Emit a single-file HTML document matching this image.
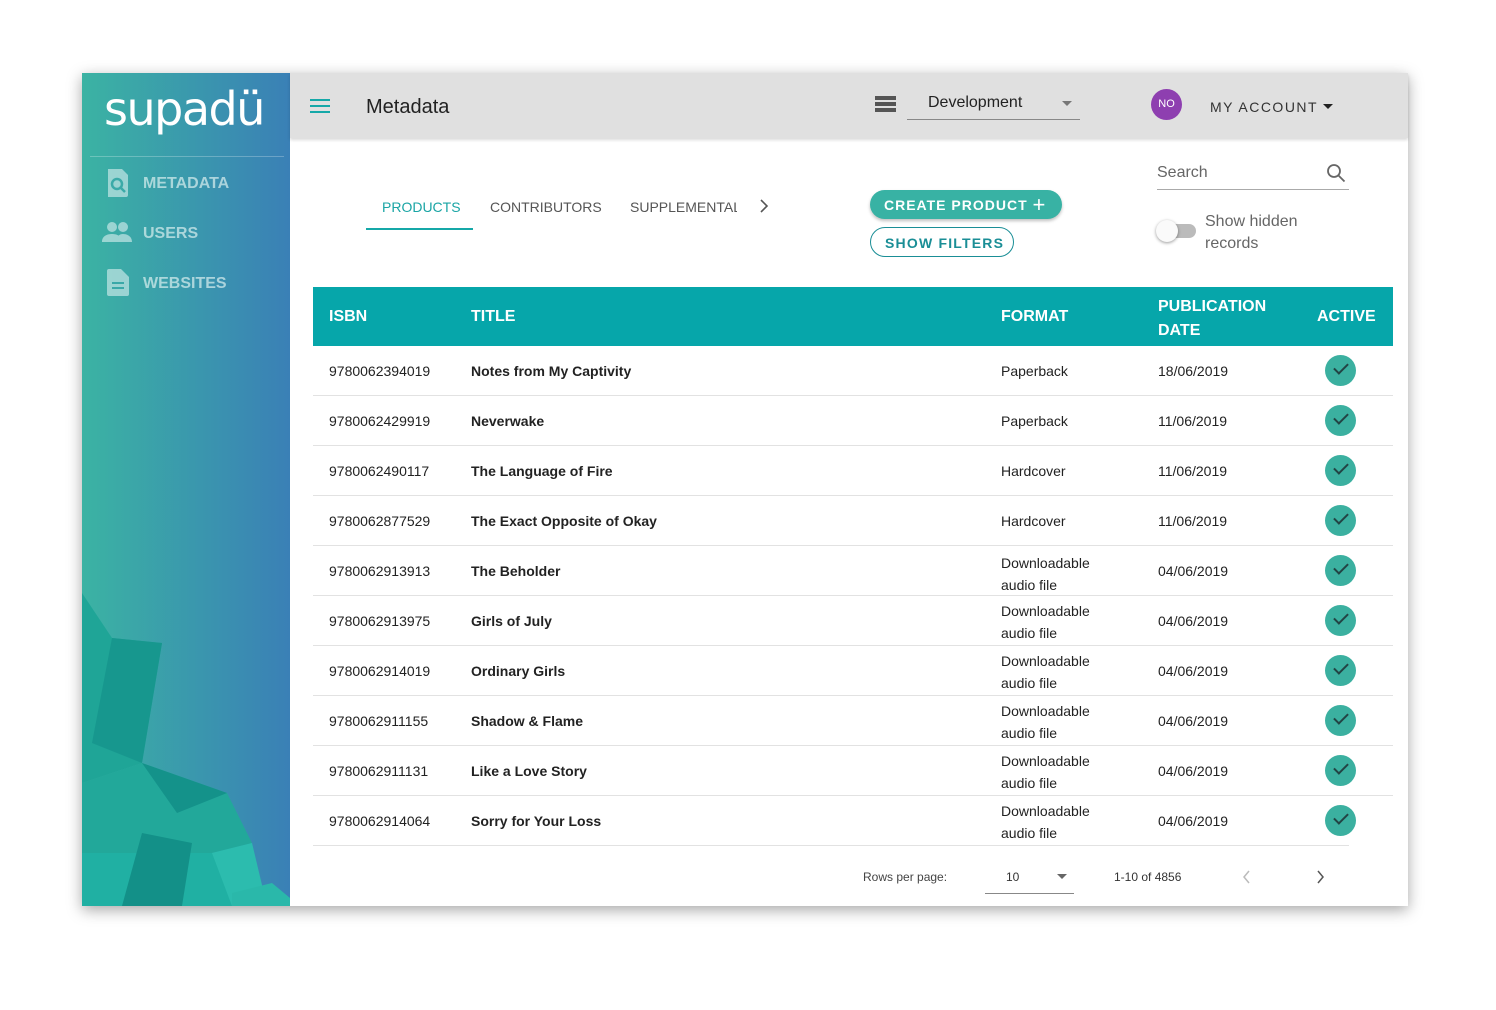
<!DOCTYPE html>
<html><head><meta charset="utf-8"><style>
*{margin:0;padding:0;box-sizing:border-box}
body{width:1496px;height:1010px;background:#fff;font-family:"Liberation Sans",sans-serif;position:relative;overflow:hidden}
.win{position:absolute;left:82px;top:73px;width:1326px;height:833px;background:#fff;box-shadow:0 4px 14px rgba(0,0,0,.35)}
.side{position:absolute;left:0;top:0;width:208px;height:833px;background:linear-gradient(90deg,#3bb3a3,#3a80b6);overflow:hidden}
.logo{position:absolute;left:22px;top:9px;color:#fff;font-size:46px;font-family:"DejaVu Sans","Liberation Sans",sans-serif;letter-spacing:-1.5px;font-weight:500}
.sep{position:absolute;left:8px;top:83px;width:194px;height:1px;background:rgba(255,255,255,.25)}
.nav{position:absolute;left:61px;color:rgba(220,240,240,.7);font-weight:bold;font-size:16px}
.top{position:absolute;left:208px;top:0;width:1118px;height:65px;background:#e0e0e0;box-shadow:0 2px 3px rgba(0,0,0,.15)}
.a{position:absolute;white-space:nowrap}
.th{position:absolute;left:231px;top:214px;width:1080px;height:59px;background:#06a6aa;color:#fff;font-weight:bold;font-size:16px}
.row{position:absolute;left:231px;width:1080px;height:50px;border-bottom:1px solid #e2e2e2;font-size:14px;color:#222}
.row span{position:absolute}
.chk{position:absolute;left:1012px;top:9px;width:31px;height:31px;border-radius:50%;background:#3bb0a0}
.chk::after{content:"";position:absolute;left:9px;top:8px;width:12px;height:6px;border-left:2px solid #244;border-bottom:2px solid #244;transform:rotate(-45deg)}
</style></head><body>
<div class="win">
<div class="side">
<div class="logo">supadü</div>
<div class="sep"></div>
<svg class="a" style="left:24px;top:96px" width="24" height="28" viewBox="0 0 24 28"><path d="M2 0h14l6 6v20a2 2 0 0 1-2 2H2z" fill="rgba(220,240,240,.6)"/><circle cx="11" cy="15" r="5" fill="none" stroke="#3baaa8" stroke-width="2.5"/><path d="M14 18l5 5" stroke="#3baaa8" stroke-width="2.5"/></svg>
<div class="nav" style="top:102px">METADATA</div>
<svg class="a" style="left:20px;top:148px" width="30" height="22" viewBox="0 0 30 22"><circle cx="10" cy="6" r="5" fill="rgba(220,240,240,.6)"/><circle cx="21" cy="6" r="5" fill="rgba(220,240,240,.6)"/><path d="M0 21c0-6 5-8 10-8s10 2 10 8zM14 21c0-5 3-8 7-8s9 2 9 8z" fill="rgba(220,240,240,.6)"/></svg>
<div class="nav" style="top:152px">USERS</div>
<svg class="a" style="left:25px;top:196px" width="22" height="27" viewBox="0 0 22 27"><path d="M2 0h12l8 8v17a2 2 0 0 1-2 2H2a2 2 0 0 1-2-2V2a2 2 0 0 1 2-2z" fill="rgba(220,240,240,.6)"/><path d="M5 14h12M5 19h12" stroke="#3aa8a8" stroke-width="2"/></svg>
<div class="nav" style="top:202px">WEBSITES</div>
<svg class="a" style="left:0;top:520px" width="208" height="313" viewBox="0 0 208 313">
<polygon points="0,0 30,45 80,50 60,170 0,190" fill="#1fa597"/>
<polygon points="30,45 80,50 60,170 10,150" fill="#17978e"/>
<polygon points="0,190 60,170 145,200 170,250 130,260 0,260" fill="#22a89a"/>
<polygon points="60,170 145,200 95,220" fill="#14928a"/>
<polygon points="0,260 130,260 170,250 150,313 0,313" fill="#20b0a3"/>
<polygon points="60,240 110,250 100,313 40,313" fill="#139088"/>
<polygon points="130,260 170,250 185,313 150,313" fill="#2cbcae"/>
<polygon points="150,300 190,290 208,305 208,313 150,313" fill="#2ab8aa"/>
</svg>
</div>
<div class="top">
<svg class="a" style="left:20px;top:26px" width="20" height="14"><path d="M0 1h20M0 7h20M0 13h20" stroke="#15a8a8" stroke-width="2"/></svg>
<div class="a" style="left:76px;top:23px;font-size:20px;color:#222">Metadata</div>
<svg class="a" style="left:585px;top:23px" width="21" height="16"><rect y="0" width="21" height="4" fill="#555"/><rect y="6" width="21" height="4" fill="#555"/><rect y="12" width="21" height="4" fill="#555"/></svg>
<div class="a" style="left:638px;top:21px;font-size:16px;color:#222">Development</div>
<div class="a" style="left:772px;top:28px;border:5px solid transparent;border-top-color:#777"></div>
<div class="a" style="left:617px;top:46px;width:173px;height:1px;background:#888"></div>
<div class="a" style="left:861px;top:16px;width:31px;height:31px;border-radius:50%;background:#8e3fb0;color:#fff;font-size:11px;text-align:center;line-height:31px">NO</div>
<div class="a" style="left:920px;top:26px;font-size:14px;letter-spacing:1.5px;color:#333">MY ACCOUNT</div>
<div class="a" style="left:1033px;top:31px;border:5px solid transparent;border-top-color:#222"></div>
</div>
<div class="a" style="left:300px;top:126px;font-size:14px;color:#1aa5a5">PRODUCTS</div>
<div class="a" style="left:284px;top:155px;width:107px;height:2px;background:#15a8a8"></div>
<div class="a" style="left:408px;top:126px;font-size:14px;color:#555">CONTRIBUTORS</div>
<div class="a" style="left:548px;top:126px;font-size:14px;color:#555;width:107px;overflow:hidden">SUPPLEMENTAL</div>
<svg class="a" style="left:677px;top:126px" width="10" height="14"><path d="M2 1l6 6-6 6" stroke="#555" stroke-width="1.6" fill="none"/></svg>
<div class="a" style="left:788px;top:117px;width:192px;height:29px;border-radius:15px;background:#38b2a4;color:#fff;font-weight:bold;font-size:14px;letter-spacing:1px;padding:7px 0 0 14px;box-shadow:0 2px 3px rgba(0,0,0,.25)">CREATE PRODUCT <span style="font-size:22px;position:relative;top:2px;font-weight:normal;line-height:0">+</span></div>
<div class="a" style="left:788px;top:154px;width:144px;height:30px;border-radius:15px;border:1px solid #1a8e96;color:#1a8e96;font-weight:bold;font-size:14px;letter-spacing:1.2px;padding:7px 0 0 14px">SHOW FILTERS</div>
<div class="a" style="left:1075px;top:91px;font-size:16px;color:#666">Search</div>
<svg class="a" style="left:1244px;top:90px" width="20" height="20"><circle cx="8" cy="8" r="6" fill="none" stroke="#666" stroke-width="1.8"/><path d="M12.5 12.5l6 6" stroke="#666" stroke-width="1.8"/></svg>
<div class="a" style="left:1075px;top:116px;width:192px;height:1px;background:#aaa"></div>
<div class="a" style="left:1078px;top:151px;width:36px;height:14px;border-radius:7px;background:#bbb"></div>
<div class="a" style="left:1074px;top:147px;width:22px;height:22px;border-radius:50%;background:#fafafa;box-shadow:0 1px 3px rgba(0,0,0,.4)"></div>
<div class="a" style="left:1123px;top:138px;font-size:16px;color:#666;line-height:22px">Show hidden<br>records</div>
<div class="th">
<span class="a" style="left:16px;top:21px">ISBN</span>
<span class="a" style="left:158px;top:21px">TITLE</span>
<span class="a" style="left:688px;top:21px">FORMAT</span>
<span class="a" style="left:845px;top:8px;line-height:24px">PUBLICATION<br>DATE</span>
<span class="a" style="left:1004px;top:21px">ACTIVE</span>
</div>
<div class="row" style="top:273px"><span style="left:16px;top:17px">9780062394019</span><span style="left:158px;top:17px;font-weight:bold">Notes from My Captivity</span><span style="left:688px;top:17px">Paperback</span><span style="left:845px;top:17px">18/06/2019</span><div class="chk"></div></div>
<div class="row" style="top:323px"><span style="left:16px;top:17px">9780062429919</span><span style="left:158px;top:17px;font-weight:bold">Neverwake</span><span style="left:688px;top:17px">Paperback</span><span style="left:845px;top:17px">11/06/2019</span><div class="chk"></div></div>
<div class="row" style="top:373px"><span style="left:16px;top:17px">9780062490117</span><span style="left:158px;top:17px;font-weight:bold">The Language of Fire</span><span style="left:688px;top:17px">Hardcover</span><span style="left:845px;top:17px">11/06/2019</span><div class="chk"></div></div>
<div class="row" style="top:423px"><span style="left:16px;top:17px">9780062877529</span><span style="left:158px;top:17px;font-weight:bold">The Exact Opposite of Okay</span><span style="left:688px;top:17px">Hardcover</span><span style="left:845px;top:17px">11/06/2019</span><div class="chk"></div></div>
<div class="row" style="top:473px"><span style="left:16px;top:17px">9780062913913</span><span style="left:158px;top:17px;font-weight:bold">The Beholder</span><span style="left:688px;top:6px;line-height:22px">Downloadable<br>audio file</span><span style="left:845px;top:17px">04/06/2019</span><div class="chk"></div></div>
<div class="row" style="top:523px"><span style="left:16px;top:17px">9780062913975</span><span style="left:158px;top:17px;font-weight:bold">Girls of July</span><span style="left:688px;top:4px;line-height:22px">Downloadable<br>audio file</span><span style="left:845px;top:17px">04/06/2019</span><div class="chk"></div></div>
<div class="row" style="top:573px"><span style="left:16px;top:17px">9780062914019</span><span style="left:158px;top:17px;font-weight:bold">Ordinary Girls</span><span style="left:688px;top:4px;line-height:22px">Downloadable<br>audio file</span><span style="left:845px;top:17px">04/06/2019</span><div class="chk"></div></div>
<div class="row" style="top:623px"><span style="left:16px;top:17px">9780062911155</span><span style="left:158px;top:17px;font-weight:bold">Shadow &amp; Flame</span><span style="left:688px;top:4px;line-height:22px">Downloadable<br>audio file</span><span style="left:845px;top:17px">04/06/2019</span><div class="chk"></div></div>
<div class="row" style="top:673px"><span style="left:16px;top:17px">9780062911131</span><span style="left:158px;top:17px;font-weight:bold">Like a Love Story</span><span style="left:688px;top:4px;line-height:22px">Downloadable<br>audio file</span><span style="left:845px;top:17px">04/06/2019</span><div class="chk"></div></div>
<div class="row" style="top:723px;width:1036px"><span style="left:16px;top:17px">9780062914064</span><span style="left:158px;top:17px;font-weight:bold">Sorry for Your Loss</span><span style="left:688px;top:4px;line-height:22px">Downloadable<br>audio file</span><span style="left:845px;top:17px">04/06/2019</span><div class="chk"></div></div>
<div class="a" style="left:781px;top:797px;font-size:12px;color:#444">Rows per page:</div>
<div class="a" style="left:924px;top:797px;font-size:12px;color:#333">10</div>
<div class="a" style="left:975px;top:801px;border:5px solid transparent;border-top-color:#666"></div>
<div class="a" style="left:903px;top:820px;width:89px;height:1px;background:#888"></div>
<div class="a" style="left:1032px;top:797px;font-size:12px;color:#333">1-10 of 4856</div>
<svg class="a" style="left:1160px;top:797px" width="10" height="14"><path d="M7 1L2 7l5 6" stroke="#bbb" stroke-width="1.5" fill="none"/></svg>
<svg class="a" style="left:1234px;top:797px" width="10" height="14"><path d="M2 1l5 6-5 6" stroke="#555" stroke-width="1.5" fill="none"/></svg>
</div>
</body></html>
